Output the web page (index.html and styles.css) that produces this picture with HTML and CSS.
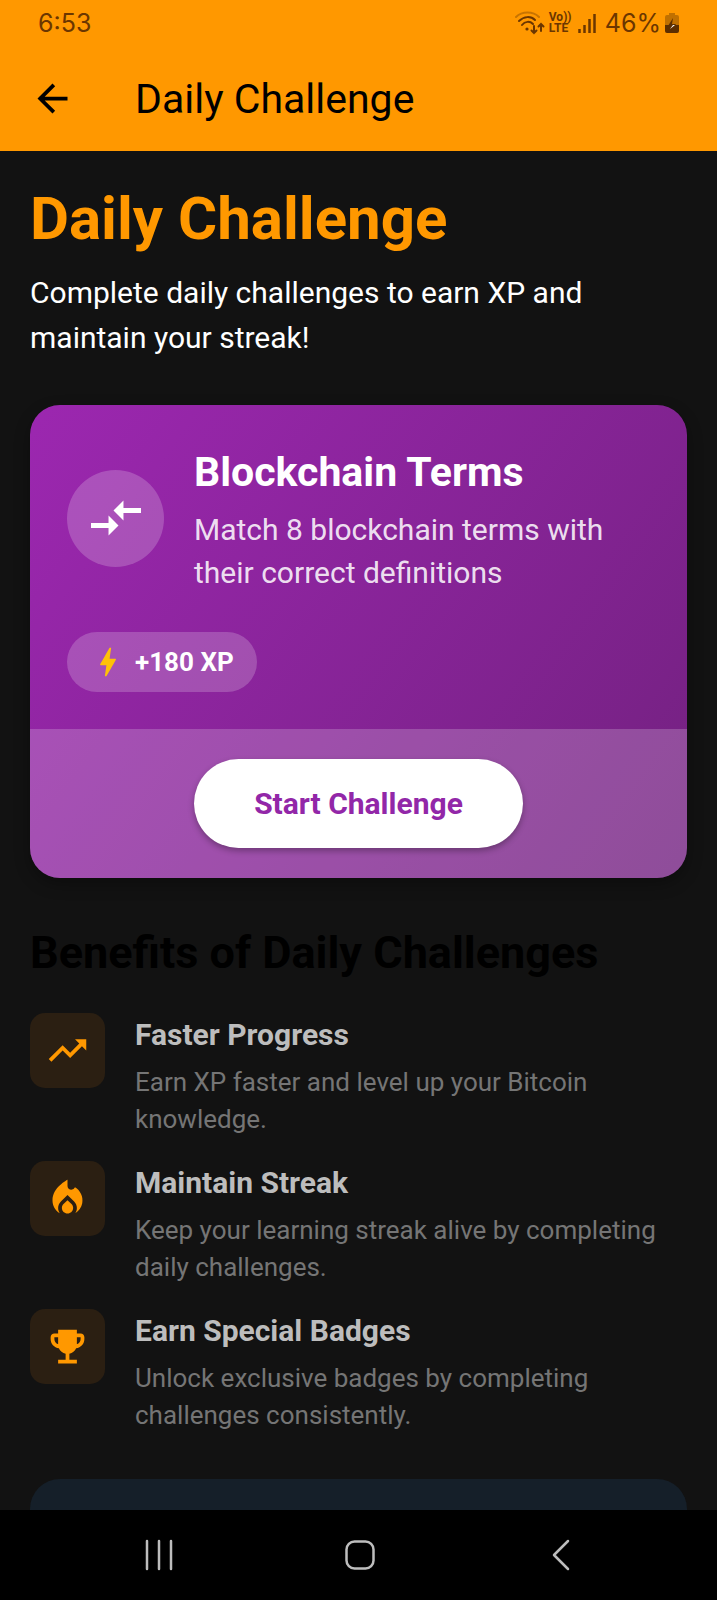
FILE: index.html
```html
<!DOCTYPE html>
<html lang="en">
<head>
<meta charset="utf-8">
<meta name="viewport" content="width=device-width, initial-scale=1">
<title>Daily Challenge</title>
<link rel="stylesheet" href="styles.css">
</head>
<body>
<div class="app">
  <header class="top">
    <div class="status">
      <span class="status-time">6:53</span>
      <div class="status-icons">
        <svg class="icon-wifi" viewBox="0 0 30 24" width="30" height="24" fill="none" stroke-width="2" stroke-linecap="round" aria-hidden="true">
          <path class="faint" d="M1 6C7 0 18 0 24 6"/>
          <path d="M4 10C9 5 16 5 20 9M7 14c3-4 8-4 11-1"/>
          <circle class="solid" cx="12" cy="18" r="1.6"/>
          <path d="M19 15v7M16.500 19.500l2.500 2.500 2.500-2.500M26 20v-7M23.500 15.500l2.500-2.500 2.500 2.500"/>
        </svg>
        <span class="volte"><span>Vo))</span><span>LTE</span></span>
        <svg class="icon-signal" viewBox="0 0 20 20" width="20" height="20" fill="none" stroke-width="2.5" aria-hidden="true">
          <path d="M2.500 16v4M7.500 12v8M12.500 6v14M17.500 1v19"/>
        </svg>
        <span class="percent">46%</span>
        <svg class="icon-battery" viewBox="0 0 14 20" width="14" height="20" aria-hidden="true">
          <path class="cell" d="M4 0h6v2h2q2 0 2 2v9H0V4q0-2 2-2h2z"/>
          <path class="charge" d="M0 12h14v6q0 2-2 2H2q-2 0-2-2z"/>
          <path class="charge" d="M8 5l-5 8h4l-1 5 5-7H7z"/>
          <path class="spark" d="M8 12l-3 4 5-4z"/>
        </svg>
      </div>
    </div>
    <div class="bar">
      <button class="back" type="button" aria-label="Back">
        <svg viewBox="0 0 24 24" width="45" height="45" aria-hidden="true"><path d="M20 11H7.830l5.590-5.590L12 4l-8 8 8 8 1.410-1.410L7.830 13H20z"/></svg>
      </button>
      <div class="bar-title">Daily Challenge</div>
    </div>
  </header>

  <main class="content">
    <h1 class="title">Daily Challenge</h1>
    <p class="lead">Complete daily challenges to earn XP and<br>maintain your streak!</p>

    <section class="card">
      <div class="card-body">
        <div class="card-head">
          <div class="card-icon">
            <svg viewBox="0 0 24 24" width="60" height="60" aria-hidden="true"><path d="M9.010 14H2v2h7.010v3L13 15l-3.990-4zM14.990 13v-3H22V8h-7.010V5L11 9z"/></svg>
          </div>
          <div class="card-text">
            <h2 class="card-title">Blockchain Terms</h2>
            <p class="card-desc">Match 8 blockchain terms with<br>their correct definitions</p>
          </div>
        </div>
        <div class="xp">
          <svg viewBox="0 0 24 24" width="38" height="38" aria-hidden="true"><path d="M11 21h-1l1-7H7.500c-.58 0-.57-.32-.38-.66C8.480 10.940 10.420 7.540 13 3h1l-1 7h3.500c.49 0 .56.33.47.51C12.960 17.550 11 21 11 21z"/></svg>
          <span>+180 XP</span>
        </div>
      </div>
      <div class="card-foot">
        <button class="start" type="button">Start Challenge</button>
      </div>
    </section>

    <h2 class="section-title">Benefits of Daily Challenges</h2>
    <ul class="benefits">
      <li class="benefit">
        <div class="tile"><svg viewBox="0 0 24 24" width="45" height="45" aria-hidden="true"><path d="M16 6l2.290 2.290-4.880 4.880-4-4L2 16.590 3.410 18l6-6 4 4 6.300-6.290L22 12V6z"/></svg></div>
        <div>
          <h3 class="benefit-title">Faster Progress</h3>
          <p class="benefit-desc">Earn XP faster and level up your Bitcoin<br>knowledge.</p>
        </div>
      </li>
      <li class="benefit">
        <div class="tile"><svg viewBox="0 0 24 24" width="45" height="45" aria-hidden="true"><path d="M12 12.900l-2.130 2.090C9.310 15.550 9 16.280 9 17.060 9 18.680 10.350 20 12 20s3-1.320 3-2.940c0-.78-.31-1.520-.87-2.070z"/><path d="M16 6l-.44.55C14.380 8.020 12 7.190 12 5.300V2S4 6 4 13c0 2.920 1.560 5.470 3.890 6.860-.56-.79-.89-1.760-.89-2.800 0-1.320.52-2.560 1.470-3.500L12 10.100l3.530 3.470c.95.93 1.470 2.170 1.470 3.500 0 1.020-.31 1.960-.85 2.750 1.890-1.150 3.290-3.060 3.710-5.300.66-3.550-1.070-6.900-3.860-8.520z"/></svg></div>
        <div>
          <h3 class="benefit-title">Maintain Streak</h3>
          <p class="benefit-desc">Keep your learning streak alive by completing<br>daily challenges.</p>
        </div>
      </li>
      <li class="benefit">
        <div class="tile"><svg viewBox="0 0 24 24" width="45" height="45" aria-hidden="true"><path d="M19 5h-2V3H7v2H5c-1.100 0-2 .9-2 2v1c0 2.550 1.920 4.630 4.390 4.940.63 1.500 1.980 2.630 3.610 2.960V19H7v2h10v-2h-4v-3.100c1.630-.33 2.980-1.460 3.610-2.960C19.080 12.630 21 10.550 21 8V7c0-1.100-.9-2-2-2zM5 8V7h2v3.820C5.840 10.400 5 9.300 5 8zm14 0c0 1.300-.84 2.400-2 2.820V7h2z"/></svg></div>
        <div>
          <h3 class="benefit-title">Earn Special Badges</h3>
          <p class="benefit-desc">Unlock exclusive badges by completing<br>challenges consistently.</p>
        </div>
      </li>
    </ul>
    <section class="next-card"></section>
  </main>

  <nav class="nav" aria-label="System">
    <button type="button" aria-label="Recent apps"><svg viewBox="0 0 32 32" width="32" height="32" aria-hidden="true"><path d="M4 2v28M16 2v28M28 2v28"/></svg></button>
    <button type="button" aria-label="Home"><svg viewBox="0 0 32 32" width="32" height="32" aria-hidden="true"><rect x="2.500" y="2.500" width="27" height="27" rx="8"/></svg></button>
    <button type="button" aria-label="Back"><svg viewBox="0 0 32 32" width="32" height="32" aria-hidden="true"><path d="M23 2L9 16l14 14"/></svg></button>
  </nav>
</div>
</body>
</html>
```

FILE: styles.css
```css
* {
  box-sizing: border-box;
}

body, h1, h2, h3, p, ul {
  margin: 0;
  padding: 0;
}

body {
  background: #121212;
  color: #fff;
  font-family: Roboto, "Liberation Sans", sans-serif;
}

button {
  border: 0;
  padding: 0;
  background: none;
  font: inherit;
  cursor: pointer;
}

svg {
  display: block;
  flex: none;
}

.app {
  display: flex;
  flex-direction: column;
  height: 100vh;
}

/* Status bar and app bar */
.top {
  flex: none;
  background: #ff9800;
  color: #000;
}

.status {
  display: flex;
  align-items: center;
  justify-content: space-between;
  height: 46px;
  padding: 0 38px;
  color: #6b3600;
  font-family: Inter, Roboto, sans-serif;
  font-size: 25px;
  line-height: 30px;
}

.status-icons {
  display: flex;
  align-items: center;
}

.status-icons svg {
  stroke: #6b3600;
}

.icon-wifi .faint {
  stroke: #c87400;
}

.icon-wifi .solid {
  fill: #6b3600;
  stroke: none;
}

.volte {
  display: flex;
  flex-direction: column;
  width: 24px;
  margin: 0 4px;
  font-family: Roboto, sans-serif;
  font-size: 12px;
  font-weight: 700;
  line-height: 11px;
}

.percent {
  margin: 0 4px 0 8px;
}

.status-icons .icon-battery {
  stroke: none;
}

.icon-battery .cell {
  fill: #c07000;
}

.icon-battery .charge {
  fill: #5c2e00;
}

.icon-battery .spark {
  fill: #fff;
}

.bar {
  display: flex;
  align-items: center;
  gap: 60px;
  height: 105px;
  padding: 0 30px;
}

.bar-title {
  font-size: 41px;
  line-height: 48px;
}

/* Page */
.content {
  flex: 1;
  min-height: 0;
  overflow: hidden;
  padding: 30px;
}

.title {
  color: #ff9800;
  font-size: 60px;
  line-height: 75px;
}

.lead {
  margin-top: 14px;
  font-size: 30px;
  line-height: 45px;
}

.card {
  margin-top: 45px;
  overflow: hidden;
  border-radius: 30px;
  background: linear-gradient(126deg, #9c27b0, #732180);
  box-shadow: 0 6px 16px rgba(0, 0, 0, 0.3);
}

.card-body {
  padding: 37px;
}

.card-head {
  display: flex;
  align-items: center;
  gap: 30px;
}

.card-icon {
  display: grid;
  place-items: center;
  flex: none;
  width: 97px;
  height: 97px;
  border-radius: 50%;
  background: rgba(255, 255, 255, 0.2);
}

.card-icon svg {
  fill: #fff;
}

.card-title {
  font-size: 41px;
  line-height: 60px;
}

.card-desc {
  margin-top: 6px;
  color: rgba(255, 255, 255, 0.87);
  font-size: 30px;
  line-height: 43px;
}

.xp {
  display: flex;
  align-items: center;
  gap: 8px;
  width: fit-content;
  height: 60px;
  margin-top: 38px;
  padding: 0 23px 0 22px;
  border-radius: 30px;
  background: rgba(255, 255, 255, 0.2);
  font-size: 26px;
  font-weight: 700;
}

.xp svg {
  fill: #ffc107;
}

.card-foot {
  display: flex;
  justify-content: center;
  padding: 30px;
  background: rgba(255, 255, 255, 0.2);
}

.start {
  height: 89px;
  padding: 0 60px;
  border-radius: 45px;
  background: #fff;
  box-shadow: 0 3px 6px rgba(0, 0, 0, 0.3);
  color: #9227a8;
  font-size: 30px;
  font-weight: 700;
}

.section-title {
  margin-top: 45px;
  color: #000;
  font-size: 45px;
  line-height: 60px;
}

.benefits {
  display: grid;
  gap: 23px;
  margin-top: 30px;
  list-style: none;
}

.benefit {
  display: flex;
  align-items: flex-start;
  gap: 30px;
}

.tile {
  display: grid;
  place-items: center;
  flex: none;
  width: 75px;
  height: 75px;
  border-radius: 15px;
  background: #2b1f12;
}

.tile svg {
  fill: #ff9800;
}

.benefit-title {
  color: #bdbdbd;
  font-size: 30px;
  line-height: 44px;
}

.benefit-desc {
  margin-top: 7px;
  color: #757575;
  font-size: 26px;
  line-height: 37px;
}

.next-card {
  height: 200px;
  margin-top: 45px;
  border-radius: 30px;
  background: #151f29;
}

/* System navigation */
.nav {
  display: grid;
  grid-template-columns: repeat(3, 1fr);
  flex: none;
  height: 90px;
  padding: 0 56px 0 58px;
  background: #000;
}

.nav button {
  display: grid;
  place-items: center;
}

.nav svg {
  fill: none;
  stroke: #bdbdbd;
  stroke-width: 2.5;
  stroke-linecap: round;
  stroke-linejoin: round;
}
```
